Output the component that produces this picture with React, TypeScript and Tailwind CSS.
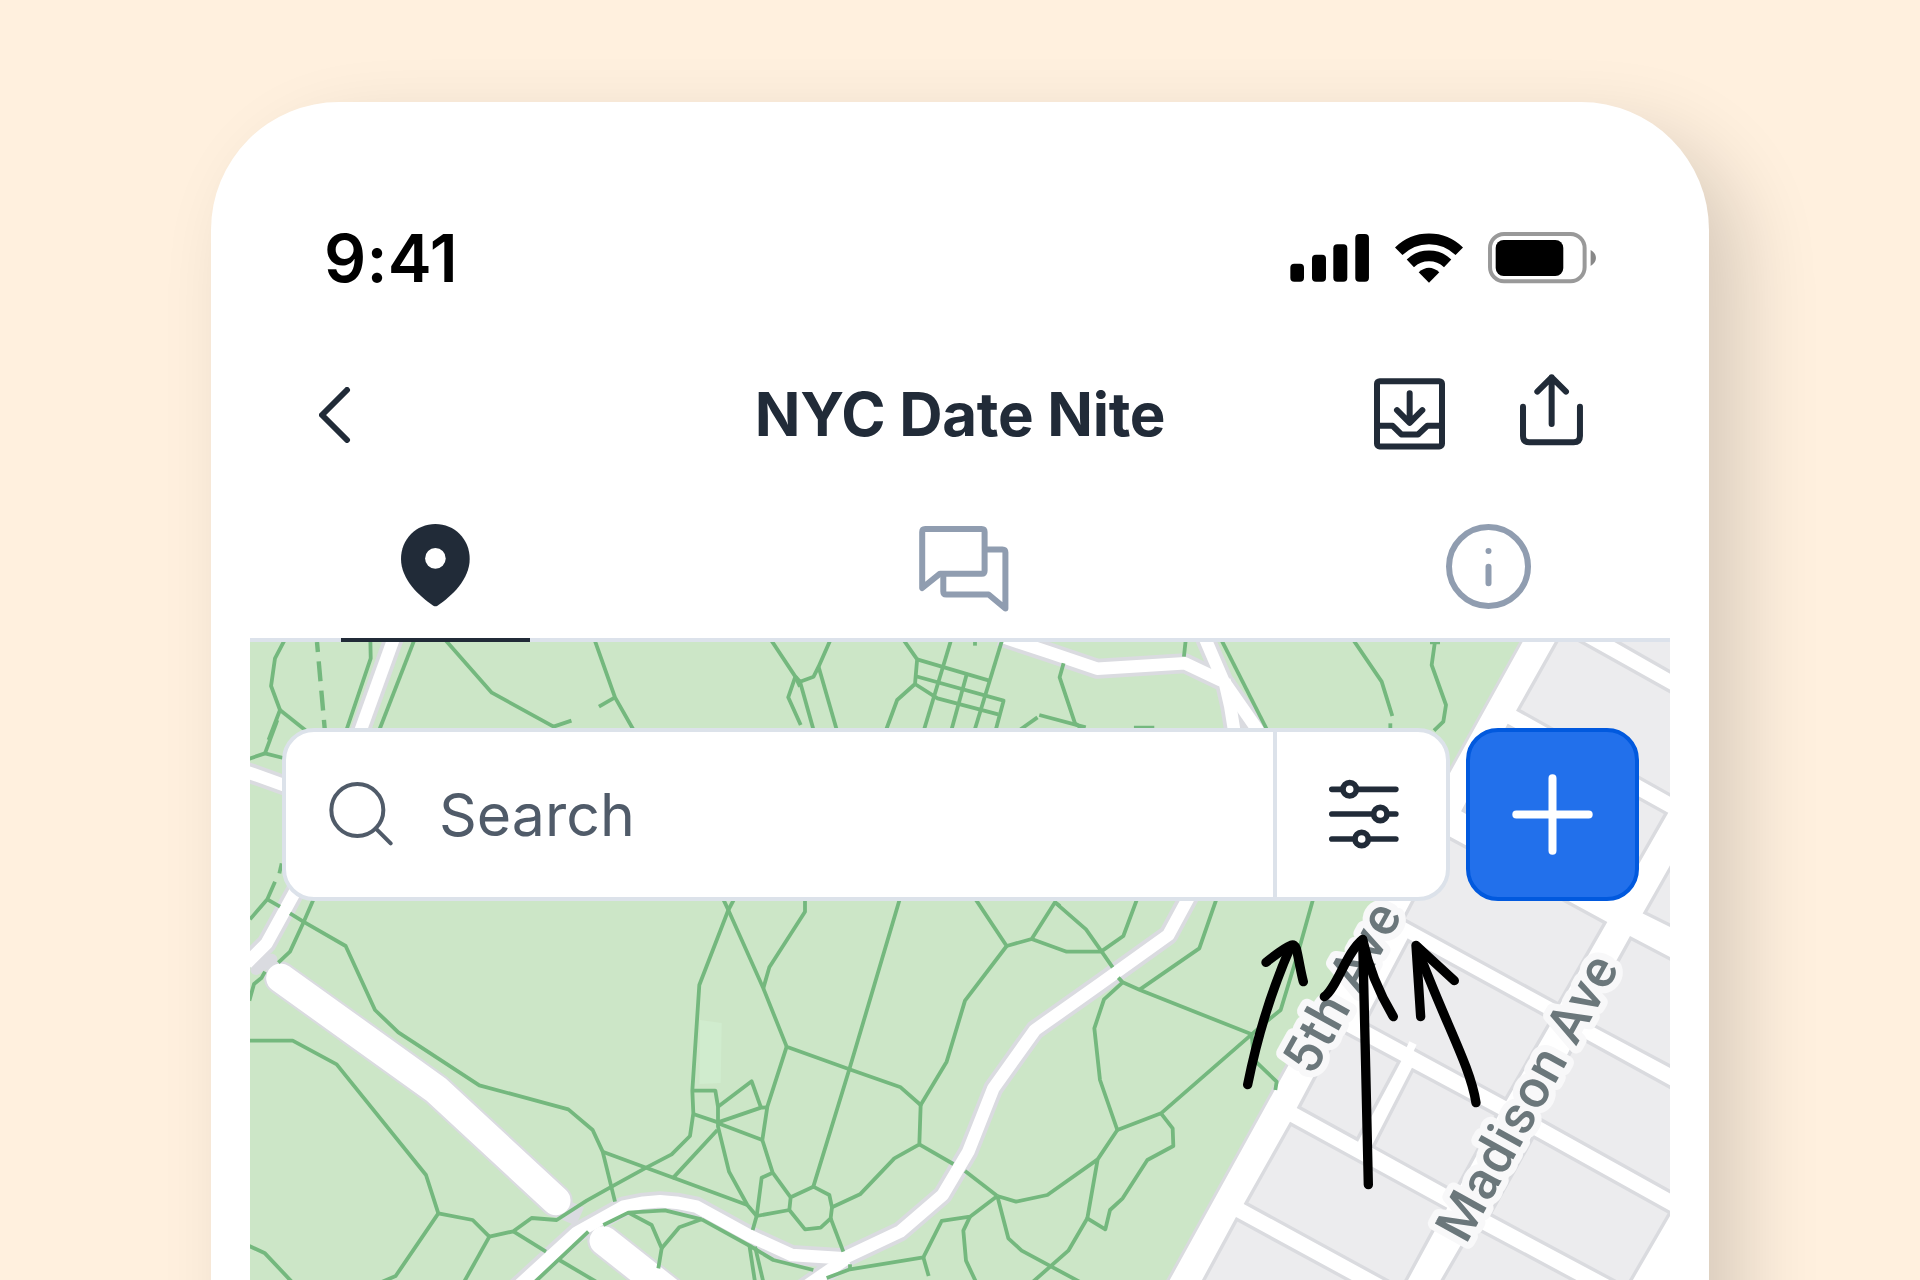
import React from 'react';

type Tile = {
  name: string;
  transform: string;
  paths: string[];
};

const THIRD = 'scale(0.33333)';
const STRIP = 'scale(0.35714 0.33333)';

const SW = `translate(240 880) ${THIRD}`;
const S = `translate(660 880) ${THIRD}`;
const SE = `translate(1000 880) ${THIRD}`;
const EAST = `translate(1340 880) ${THIRD}`;
const NW = `translate(240 480) ${STRIP}`;
const N = `translate(800 480) ${STRIP}`;
const NE = `translate(1300 480) ${THIRD}`;
const W = `translate(240 720) ${THIRD}`;

const trails: Tile[] = [
  {
    name: 'sw',
    transform: SW,
    paths: [
      'M105 5 L82 58 L30 118',
      'M82 58 L120 80',
      'M150 100 L190 125 L317 198 L405 390 L475 457 L718 616 L985 688 L1058 750 L1088 815 L1125 965',
      'M222 55 L190 128 L150 215 L115 248',
      'M75 275 L65 293 L42 312 L28 362',
      'M30 482 L158 482 L290 553 L558 885 L595 1000 L698 1020 L748 1070 L820 1054 L875 1014 L950 1020 L1040 962 L1115 920 L1220 862 L1295 823 L1350 768 L1360 700 L1357 632 L1378 315 L1465 90',
      'M595 1000 L467 1188 L425 1206',
      'M28 1098 L75 1120 L156 1206',
      'M748 1070 L672 1206',
      'M820 1054 L918 1115',
      'M1088 815 L1300 893 L1432 750',
      'M885 1206 L1045 1055',
      'M958 1140 L1070 1206',
      'M1090 1035 L1165 998 L1275 991 L1385 1018',
      'M1165 998 L1235 1035 L1265 1105 L1255 1165',
      'M1265 1105 L1318 1042 L1385 1018',
    ],
  },
  {
    name: 's',
    transform: S,
    paths: [
      'M190 58 L205 90 L310 325 L380 500 L568 568 L722 622 L782 675 L860 545 L915 362 L1040 198 L945 55',
      'M222 58 L205 90',
      'M435 58 V95 L328 262 L310 325',
      'M720 55 L568 568 L460 920',
      'M380 500 L322 680 L307 780 L338 878 L392 952 L460 920 L508 945 L516 982 L512 1015 L482 1043 L435 1048 L388 990 L392 952',
      'M97 632 H166 L174 680 L174 740 L207 875 L262 975 L290 1008 L388 990',
      'M174 680 L275 604 L303 683',
      'M322 682 L303 683 L174 727 L100 702',
      'M174 730 L307 780',
      'M40 893 L262 975',
      'M338 878 L305 893 L290 1008 L278 1050',
      'M516 982 L600 943 L703 835 L778 793 L782 675',
      'M778 793 L880 852',
      'M915 873 L1012 948',
      'M512 1015 L550 1115',
      'M125 1018 L270 1098 L340 1140 L460 1170',
      'M268 1095 L285 1206',
      'M285 1100 L310 1206',
      'M500 1194 L570 1168 L790 1132 L845 1023 L930 1010 L1012 948',
      'M790 1132 L806 1188',
      'M570 1153 V1170',
      'M930 1010 L910 1052 L918 1142 L948 1206',
    ],
  },
  {
    name: 'se',
    transform: SE,
    paths: [
      'M20 198 L95 177 L165 67 L258 148 L303 212 L338 262',
      'M165 67 L180 78',
      'M95 177 L200 215 H303 L370 168 L412 55',
      'M650 55 L598 205 L420 328',
      'M355 293 L368 307 L420 330 L755 463',
      'M368 307 L312 358 L283 445 L300 600 L352 750 L483 700 L755 463 L762 540 L830 605 L826 630',
      'M940 55 L895 215 L842 390 L805 420 L755 463',
      'M483 700 L518 745 L520 798 L442 840 L368 955 L330 990 L316 1048 L262 1015 L205 1112 L98 1206',
      'M352 750 L293 838 L262 1015',
      'M293 838 L142 945 L48 965 L-8 948',
      'M-8 948 L25 1075 L65 1112 L240 1206',
    ],
  },
  {
    name: 'nw',
    transform: NW,
    paths: [
      'M125 480 L98 535 L87 618 L112 690 L80 780',
      'M112 690 L185 752',
      'M365 480 L366 535 L298 750',
      'M488 480 L390 750',
      'M575 480 L705 638 L878 740 L928 722',
      'M993 480 L1050 652 L1102 750',
      'M1050 652 L1005 680',
      'M1487 480 L1555 590 L1535 652 L1570 735',
    ],
  },
  {
    name: 'n',
    transform: N,
    paths: [
      'M85 480 L52 560 L38 590 L0 605 L-13 590',
      'M52 560 L103 750',
      'M0 605 L38 750',
      'M-13 590 L0 620',
      'M290 480 L328 538 L322 612 L272 660 L241 750',
      'M328 538 L530 602',
      'M322 588 L570 662 L548 750',
      'M322 612 L385 655 L555 703',
      'M423 480 L347 750',
      'M566 480 L489 750',
      'M468 578 L424 750',
      'M490 480 V497',
      'M738 550 L727 592 L770 730 L790 745',
      'M615 750 L665 712',
      'M670 705 L800 742',
      'M935 743 H992',
      'M1080 480 L1075 530',
      'M1180 480 L1308 750',
    ],
  },
  {
    name: 'ne',
    transform: NE,
    paths: [
      'M160 480 L245 605 L277 708',
      'M271 730 V748',
      'M405 484 L395 555 L438 675 L430 725 L402 752',
      'M390 487 H420',
    ],
  },
  {
    name: 'w',
    transform: W,
    paths: ['M75 100 L28 116', 'M75 100 L130 114', 'M112 0 L75 100', 'M125 430 L118 460'],
  },
];

const roads: Tile[] = [
  { name: 'w', transform: W, paths: ['M10 152 L150 202'] },
  { name: 'nw', transform: NW, paths: ['M433 468 L332 768'] },
  {
    name: 'n',
    transform: N,
    paths: [
      'M560 468 L610 486 L700 518 L832 566 L1078 550 L1180 602',
      'M1130 465 L1185 602 L1288 760',
      'M1188 600 L1205 680 L1217 760',
    ],
  },
  {
    name: 'sw',
    transform: SW,
    paths: ['M168 30 L80 190 L20 250'],
  },
  {
    name: 's',
    transform: S,
    paths: [
      'M-460 1250 L-250 1058 L-110 980 L-50 968 L0 964 L50 968 L110 980 L270 1068 L395 1125 L550 1135 L720 1055 L848 945 L925 815 L1000 625 L1125 450 L1320 312 L1525 165 L1590 45',
      'M430 1225 L560 1135',
    ],
  },
];

const mall = ['M122 294 L590 630 L948 962', 'M1092 1082 L1320 1262'];

// City blocks east of the park
const blocks: Tile[] = [
  {
    name: 'ne',
    transform: NE,
    paths: [
      'M790 450 L655 690 L1150 967 L1150 657 L780 450Z',
      'M890 450 L1150 598 V450Z',
      'M625 738 L1098 1000 L955 1250 L490 992Z',
    ],
  },
  {
    name: 'east',
    transform: EAST,
    paths: [
      'M320 -130 L795 128 L655 372 L190 118Z',
      'M915 98 L1050 165 V-140Z',
      'M872 175 L1050 268 V590 L735 422Z',
      'M205 182 L635 418 L497 657 L75 428Z',
      'M715 470 L1050 655 V968 L590 712Z',
      'M218 570 L470 705 L345 935 L100 800Z',
      'M580 770 L990 998 L860 1222 L450 1003Z',
      'M400 1040 L740 1222 L290 1230Z',
    ],
  },
  {
    name: 'se',
    transform: SE,
    paths: [
      'M1020 450 L1197 545 L1072 778 L897 682Z',
      'M872 732 L1335 985 L1205 1225 L738 970Z',
      'M710 1018 L1100 1230 L590 1240Z',
    ],
  },
];

function Lines({ tiles, stroke, width }: { tiles: Tile[]; stroke: string; width: number }) {
  return (
    <g fill="none" stroke={stroke} strokeWidth={width} strokeLinejoin="round">
      {tiles.map(tile => (
        <g key={tile.name} transform={tile.transform}>
          {tile.paths.map(d => (
            <path key={d} d={d} vectorEffect="non-scaling-stroke" />
          ))}
        </g>
      ))}
    </g>
  );
}

function StreetLabel({ x, y, children }: { x: number; y: number; children: string }) {
  return (
    <text
      transform={`translate(${x} ${y}) rotate(-61)`}
      className="font-['Roboto',sans-serif] text-[53px] font-medium tracking-[0.02em]"
      fill="#6b777b"
      stroke="#f8f8f9"
      strokeWidth="14"
      strokeLinejoin="round"
      paintOrder="stroke"
    >
      {children}
    </text>
  );
}

function ParkMap() {
  return (
    <svg className="absolute inset-0" width="1420" height="638" viewBox="250 642 1420 638">
      <rect x="250" y="642" width="1420" height="638" fill="#cce6c7" />
      <path d="M700 1020 L721.7 1023 L720.7 1083 L699.5 1084Z" fill="#d0ecce" />

      <path d="M1532 622 L1450 770 L1157 1300 H1700 V600Z" fill="#fff" stroke="#dadbdf" strokeWidth="3" />
      <g fill="#ececee" stroke="#dadbdf" strokeWidth="3.4">
        {blocks.map(tile => (
          <g key={tile.name} transform={tile.transform}>
            {tile.paths.map(d => (
              <path key={d} d={d} vectorEffect="non-scaling-stroke" />
            ))}
          </g>
        ))}
      </g>
      <path d="M1413 1043 L1407 1056" stroke="#fff" strokeWidth="8" />

      <Lines tiles={roads} stroke="#dadbe0" width={20} />
      <g transform={SW} fill="none" stroke="#dadbe0" strokeLinecap="round">
        {mall.map(d => (
          <path key={d} d={d} strokeWidth="100" />
        ))}
        <path d="M48 268 L95 238" strokeWidth="34" />
        <path d="M975 990 L1020 1010" strokeWidth="60" strokeLinecap="butt" />
      </g>
      <Lines tiles={roads} stroke="#fff" width={12.5} />
      <g transform={SW} fill="none" stroke="#fff" strokeWidth="87" strokeLinecap="round">
        {mall.map(d => (
          <path key={d} d={d} />
        ))}
      </g>

      <Lines tiles={trails} stroke="#74b87e" width={3.8} />
      <path d="M317 642 L325 732" fill="none" stroke="#74b87e" strokeWidth="4.4" strokeDasharray="20 9.4" strokeDashoffset="10" />

      <StreetLabel x={1313} y={1077}>5th Ave</StreetLabel>
      <StreetLabel x={1466} y={1245}>Madison Ave</StreetLabel>
    </svg>
  );
}

function Arrows() {
  return (
    <svg
      className="absolute inset-0 pointer-events-none"
      width="1420"
      height="638"
      viewBox="250 642 1420 638"
      fill="none"
      stroke="#000"
      strokeLinecap="round"
      strokeLinejoin="round"
    >
      <g transform={SE} strokeWidth="28">
        <path d="M743 614 C770 480 815 330 872 200" />
        <path d="M798 247 C830 222 850 205 873 196 Q884 191 889 206 C897 240 902 275 910 305" />
        <path d="M1105 914 L1097 560 L1088 180" />
        <path d="M973 350 C1010 325 1040 215 1088 178 C1105 260 1135 335 1180 410" />
      </g>
      <g transform={EAST} strokeWidth="28">
        <path d="M408 668 C390 555 315 430 230 200" />
        <path d="M242 410 L228 196 L343 302" />
      </g>
    </svg>
  );
}

function StatusBar() {
  return (
    <div className="flex h-[52px] items-center justify-between pl-[113px] pr-[113px]">
      <span className="text-[66px] font-semibold leading-[52px] tracking-[0.003em] text-black">9:41</span>
      <div className="flex items-center gap-[25px]">
        <svg width="79.3" height="51.3" viewBox="273 97 238 154">
          <rect x="274" y="192" width="41" height="54" rx="12" />
          <rect x="339" y="165" width="42" height="81" rx="12" />
          <rect x="403" y="134" width="42" height="112" rx="12" />
          <rect x="469" y="103" width="41" height="143" rx="12" />
        </svg>
        <svg width="68" height="51.3" viewBox="586 97 204 154">
          <path d="M597 155 A129 129 0 0 1 779 155" fill="none" stroke="#000" strokeWidth="32" />
          <path d="M632 191 A82 82 0 0 1 744 191" fill="none" stroke="#000" strokeWidth="32" />
          <path d="M688 249 L657 218 Q688 190 719 218Z" />
        </svg>
        <svg width="108.3" height="51.3" viewBox="865 97 325 154">
          <rect x="871" y="103" width="284" height="142" rx="42" fill="none" stroke="#999" strokeWidth="12" />
          <rect x="888" y="121" width="203" height="108" rx="24" />
          <path d="M1173 151 Q1189 160 1189 175 Q1189 190 1173 199Z" fill="#888" />
        </svg>
      </div>
    </div>
  );
}

function Header() {
  return (
    <div className="mt-[90px] grid h-[76px] grid-cols-[440px_1fr_440px] text-[#212b38]">
      <button className="flex items-center pl-[108px] pt-[3px]">
        <svg width="32" height="56" viewBox="0 0 32 56" fill="none" stroke="currentColor" strokeWidth="6" strokeLinecap="round" strokeLinejoin="round">
          <path d="M28 3 L3 28 L28 53" />
        </svg>
      </button>
      <h1 className="whitespace-nowrap pt-[2px] text-center text-[60px] font-bold leading-[76px] tracking-[-0.005em]">NYC Date Nite</h1>
      <div className="flex items-start justify-end gap-[75px] pr-[126px]">
        <svg className="mt-1" width="71" height="71.6" viewBox="522 535 213 214" fill="none" stroke="currentColor" strokeWidth="18" strokeLinecap="round" strokeLinejoin="round">
          <rect x="531" y="544" width="195" height="196" rx="8" />
          <path d="M531 678 H578 L604 704 H654 L682 678 H726" />
          <path d="M629 580 V668 M591 631 L629 669 L667 631" />
        </svg>
        <svg width="63.3" height="71.6" viewBox="960 523 190 215" fill="none" stroke="currentColor" strokeWidth="18" strokeLinecap="round" strokeLinejoin="round">
          <path d="M969 621 V709 Q969 728 988 728 H1121 Q1140 728 1140 709 V621" />
          <path d="M1055 673 V533 M1012 576 L1055 533 L1098 576" />
        </svg>
      </div>
    </div>
  );
}

function Tabs() {
  return (
    <div className="mx-[39px] mt-[60px] flex h-[132px] justify-between border-b-4 border-[#dce2eb] pl-[91px] pr-[87px] text-[#909db0]">
      <button className="-mb-1 flex w-[189px] justify-center border-b-4 border-[#212b38] pt-[14px] text-[#212b38]">
        <svg width="69" height="83" viewBox="0 0 69 83">
          <path
            d="M34.4 0 C53.5 0 68.7 15 68.7 35 C68.7 55 51 72 36.5 81.7 Q34.4 83 32.3 81.7 C17.8 72 0 55 0 35 C0 15 15.3 0 34.4 0Z"
            fill="currentColor"
          />
          <circle cx="34.4" cy="34.4" r="10.3" fill="#fff" />
        </svg>
      </button>
      <button className="flex w-[189px] justify-center pl-[4px] pt-[16px]">
        <svg width="90" height="86" viewBox="0 0 90 86" fill="none" stroke="currentColor" strokeWidth="6" strokeLinecap="round" strokeLinejoin="round">
          <path d="M3.2 62 V6 Q3.2 3 6.2 3 H62.6 Q65.6 3 65.6 6 V44.7 Q65.6 47.7 62.6 47.7 H21 Z" />
          <path d="M66 23.5 H83.4 Q86.4 23.5 86.4 26.5 V82.5 L69.6 68.5 H27.3 Q24.3 68.5 24.3 65.5 V49" />
        </svg>
      </button>
      <button className="flex w-[189px] justify-center pt-[14px]">
        <svg width="85" height="85" viewBox="0 0 85 85" fill="none" stroke="currentColor" strokeWidth="6" strokeLinecap="round">
          <circle cx="42.5" cy="42.5" r="39.5" />
          <path d="M42.5 42.8 V59.2 M42.5 27 V27.01" />
        </svg>
      </button>
    </div>
  );
}

function SearchRow() {
  return (
    <div className="relative flex gap-4 pl-8 pt-[86px]">
      <div className="flex h-[173px] w-[1168px] rounded-[32px] border-4 border-[#dce2ea] bg-white">
        <div className="flex flex-1 items-center pl-[43px] text-[#505b69]">
          <svg className="-mt-px" width="64" height="64" viewBox="266 188 192 192" fill="none" stroke="currentColor" strokeWidth="12" strokeLinecap="round">
            <circle cx="351" cy="272" r="78" />
            <path d="M406 327 L451 372" />
          </svg>
          <span className="-mt-px ml-[46px] text-[59px] leading-none">Search</span>
        </div>
        <button className="flex w-[173px] items-center justify-center border-l-4 border-[#dce2ea] pl-[5px]">
          <svg className="-mt-px" width="70" height="70" viewBox="84 899 210 210" fill="none" stroke="#212b38" strokeWidth="17" strokeLinecap="round">
            <path d="M92.5 930 H284.5 M92.5 1004 H284.5 M92.5 1079 H284.5" />
            <g fill="#fff">
              <circle cx="146" cy="930" r="20" />
              <circle cx="238" cy="1004" r="20" />
              <circle cx="182" cy="1079" r="20" />
            </g>
          </svg>
        </button>
      </div>
      <button className="flex h-[173px] w-[173px] items-center justify-center rounded-[32px] border-4 border-[#0159de] bg-[#2270eb]">
        <svg width="81" height="81" viewBox="0 0 81 81" stroke="#fff" strokeWidth="8" strokeLinecap="round">
          <path d="M4.3 40.5 H76.7 M40.5 4.3 V76.7" />
        </svg>
      </button>
    </div>
  );
}

export default function App() {
  return (
    <div className="h-[1280px] w-[1920px] overflow-hidden bg-[#fff0de] pt-[102px] font-['Inter',sans-serif]">
      <div className="mx-auto h-[1400px] w-[1498px] rounded-t-[128px] bg-white pt-[130px] shadow-[32px_32px_80px_rgba(0,0,0,0.16)]">
        <StatusBar />
        <Header />
        <Tabs />
        <div className="relative mx-[39px] h-[638px] overflow-hidden">
          <ParkMap />
          <SearchRow />
          <Arrows />
        </div>
      </div>
    </div>
  );
}
